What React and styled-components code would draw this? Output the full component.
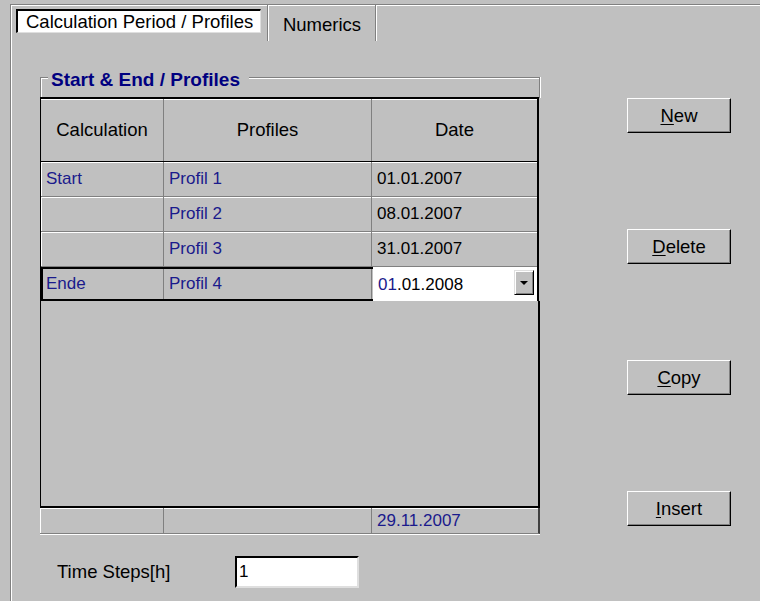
import styled, { createGlobalStyle } from 'styled-components';

const GlobalStyle = createGlobalStyle`
  * { box-sizing: border-box; }
  body {
    margin: 0;
    background: #c0c0c0;
  }
`;

const Window = styled.div`
  width: 760px;
  height: 601px;
  overflow: hidden;
  background: #c0c0c0;
  padding-left: 10px;
  font-family: "Liberation Sans", Arial, sans-serif;
  font-size: 17px;
  color: #000;
`;

const Sheet = styled.div`
  height: 100%;
  border-left: 1px solid #808080;
  box-shadow: inset 1px 0 0 #fff;
`;

// tab header row
const TabStrip = styled.div`
  display: flex;
  align-items: flex-start;
  height: 40px;
  margin-top: 4px;
  border-top: 1px solid #808080;
  box-shadow: inset 0 1px 0 #fff;
  font-size: 18.5px;
`;

const Tab = styled.div`
  height: ${(p) => (p.active ? '24px' : '36px')};
  margin-top: ${(p) => (p.active ? '4px' : '0')};
  margin-left: ${(p) => (p.active ? '5px' : '0')};
  width: ${(p) => p.width}px;
  display: flex;
  align-items: ${(p) => (p.active ? 'center' : 'flex-start')};
  justify-content: ${(p) => (p.active ? 'flex-start' : 'center')};
  padding: ${(p) => (p.active ? '0 0 0 8px' : '9px 0 0')};
  background: ${(p) => (p.active ? '#fff' : 'transparent')};
  border-style: solid;
  border-width: ${(p) => (p.active ? '2px 1px 1px 2px' : '0')};
  border-color: #000 #dfdfdf #dfdfdf #000;
  white-space: nowrap;
`;

const TabDivider = styled.div`
  width: 2px;
  height: 36px;
  margin-left: ${(p) => p.gap || 0}px;
  border-left: 1px solid #808080;
  border-right: 1px solid #fff;
`;

const Body = styled.div`
  display: flex;
  padding-left: 29px;
  gap: 87px;
`;

const LeftColumn = styled.div`
  display: flex;
  flex-direction: column;
  padding-top: 33px;
`;

const GroupBox = styled.section`
  position: relative;
  width: 500px;
  padding-top: 20px;

  &::before {
    content: "";
    position: absolute;
    top: 0;
    left: 0;
    right: 0;
    height: 20px;
    border: 1px solid #808080;
    border-bottom: none;
    box-shadow: inset 1px 1px 0 #fff, 1px 0 0 #fff;
  }
`;

const GroupTitle = styled.h2`
  position: absolute;
  top: -8px;
  left: 8px;
  margin: 0;
  padding: 0 9px 0 3px;
  background: #c0c0c0;
  color: #000080;
  font-size: 19px;
  font-weight: bold;
  line-height: 22px;
`;

const Grid = styled.div`
  position: relative;
  width: 499px;
  border-top: 2px solid #000;
  border-left: 1px solid #000;
  border-right: 2px solid #000;
`;

const Row = styled.div`
  display: grid;
  grid-template-columns: 123px 208px 1fr;
  height: ${(p) => p.height}px;
  outline: ${(p) => (p.selected ? '2px solid #000' : 'none')};
  outline-offset: -2px;
  border-bottom: ${(p) => (p.header ? '1px solid #000' : 'none')};
  font-size: ${(p) => (p.header ? '18.5px' : 'inherit')};
`;

const Cell = styled.div`
  display: flex;
  align-items: center;
  justify-content: ${(p) => (p.center ? 'center' : 'flex-start')};
  padding-left: ${(p) => (p.center ? 0 : 5)}px;
  color: ${(p) => (p.blue ? '#1a1a8c' : '#000')};
  border-right: ${(p) => (p.last ? 'none' : '1px solid #808080')};
  border-bottom: ${(p) => (p.flat ? 'none' : '1px solid #808080')};
  box-shadow: inset ${(p) => (p.first ? '1px' : '0')} 1px 0 #fff;
  white-space: nowrap;
`;

const EditCell = styled.div`
  position: relative;
  display: flex;
  align-items: center;
  padding: 1px 0 0 5px;
  background: #fff;
  margin-left: 1px;
`;

const Selected = styled.span`
  color: #1a1a8c;
`;

const DropButton = styled.div`
  position: absolute;
  top: 3px;
  right: 3px;
  width: 20px;
  height: 25px;
  background: #c0c0c0;
  border: 1px solid;
  border-color: #dfdfdf #000 #000 #dfdfdf;
  box-shadow: inset 1px 1px 0 #fff, inset -1px -1px 0 #808080;
  display: flex;
  align-items: center;
  justify-content: center;

  svg {
    display: block;
  }
`;

const EmptyArea = styled.div`
  height: 207px;
  border-left: 1px solid #000;
  border-right: 2px solid #000;
  border-bottom: 2px solid #000;
  width: 500px;
`;

const Footer = styled.div`
  display: grid;
  grid-template-columns: 124px 208px 1fr;
  width: 500px;
  height: 26px;
  border-right: 2px solid #404040;
  border-bottom: 1px solid #808080;
  box-shadow: 0 1px 0 #fff;
`;

const StepsRow = styled.div`
  display: flex;
  align-items: center;
  margin-top: 22px;
  padding-left: 17px;
  font-size: 18.5px;
`;

const StepsLabel = styled.label`
  width: 178px;
`;

const StepsInput = styled.div`
  width: 124px;
  height: 32px;
  background: #fff;
  border-style: solid;
  border-width: 2px;
  border-color: #000 #dfdfdf #dfdfdf #000;
  display: flex;
  align-items: center;
  padding-left: 2px;
  font-size: 17px;
`;

const RightColumn = styled.div`
  display: flex;
  flex-direction: column;
  gap: 96px;
  padding-top: 54px;
`;

const Button = styled.button`
  width: 104px;
  height: 35px;
  background: #c0c0c0;
  border: 1px solid;
  border-color: #fff #000 #000 #fff;
  box-shadow: inset -1px -1px 0 #808080;
  font-family: inherit;
  font-size: 18.5px;
  color: #000;
  padding: 0;

  u {
    text-decoration-thickness: 1px;
    text-underline-offset: 2px;
  }
`;

const rows = [
  { calc: 'Start', profile: 'Profil 1', date: '01.01.2007' },
  { calc: '', profile: 'Profil 2', date: '08.01.2007' },
  { calc: '', profile: 'Profil 3', date: '31.01.2007' },
];

const buttons = [
  ['N', 'ew'],
  ['D', 'elete'],
  ['C', 'opy'],
  ['I', 'nsert'],
];

export default function App() {
  return (
    <Window>
      <GlobalStyle />
      <Sheet>
        <TabStrip>
          <Tab active width={245}>Calculation Period / Profiles</Tab>
          <TabDivider gap={6} />
          <Tab width={106}>Numerics</Tab>
          <TabDivider />
        </TabStrip>

        <Body>
          <LeftColumn>
            <GroupBox>
              <GroupTitle>Start &amp; End / Profiles</GroupTitle>
              <Grid>
                <Row header height={63}>
                  <Cell center flat>Calculation</Cell>
                  <Cell center flat>Profiles</Cell>
                  <Cell center flat last>Date</Cell>
                </Row>
                {rows.map((r, i) => (
                  <Row key={i} height={35}>
                    <Cell first blue>{r.calc}</Cell>
                    <Cell blue>{r.profile}</Cell>
                    <Cell last>{r.date}</Cell>
                  </Row>
                ))}
                <Row selected height={34}>
                  <Cell first blue>Ende</Cell>
                  <Cell blue>Profil 4</Cell>
                  <EditCell>
                    <span>
                      <Selected>01</Selected>.01.2008
                    </span>
                    <DropButton>
                      <svg width="8" height="4" viewBox="0 0 8 4">
                        <path d="M0 0h8L4 4z" fill="#000" />
                      </svg>
                    </DropButton>
                  </EditCell>
                </Row>
              </Grid>
              <EmptyArea />
              <Footer>
                <Cell first flat />
                <Cell flat />
                <Cell flat last blue>29.11.2007</Cell>
              </Footer>
            </GroupBox>

            <StepsRow>
              <StepsLabel>Time Steps[h]</StepsLabel>
              <StepsInput>1</StepsInput>
            </StepsRow>
          </LeftColumn>

          <RightColumn>
            {buttons.map(([key, rest]) => (
              <Button key={key}>
                <u>{key}</u>
                {rest}
              </Button>
            ))}
          </RightColumn>
        </Body>
      </Sheet>
    </Window>
  );
}
